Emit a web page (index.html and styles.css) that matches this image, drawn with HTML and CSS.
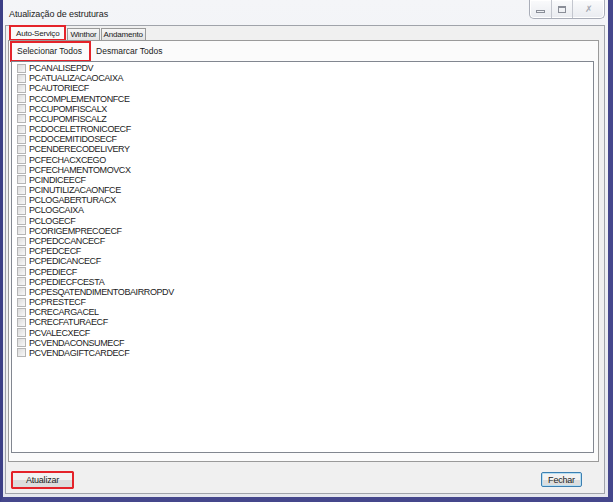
FILE: index.html
```html
<!DOCTYPE html>
<html lang="pt-BR">
<head>
    <meta charset="UTF-8">
    <link rel="stylesheet" href="styles.css">
</head>
<body>
    <div class="window">
        <div class="titlebar">
            <span class="title">Atualização de estruturas</span>
            <div class="caption-btns">
                <span class="cap-btn min"><i></i></span>
                <span class="cap-btn max"><i></i></span>
                <span class="cap-btn close">&#x2717;</span>
            </div>
        </div>
        <div class="client">
            <div class="tabs">
                <span class="tab active marked">Auto-Serviço</span>
                <span class="tab">Winthor</span>
                <span class="tab">Andamento</span>
            </div>
            <div class="tab-panel">
                <div class="toolbar">
                    <span class="tool marked">Selecionar Todos</span>
                    <span class="tool">Desmarcar Todos</span>
                </div>
                <div class="list">
                    <label class="item"><span class="box"></span>PCANALISEPDV</label>
                    <label class="item"><span class="box"></span>PCATUALIZACAOCAIXA</label>
                    <label class="item"><span class="box"></span>PCAUTORIECF</label>
                    <label class="item"><span class="box"></span>PCCOMPLEMENTONFCE</label>
                    <label class="item"><span class="box"></span>PCCUPOMFISCALX</label>
                    <label class="item"><span class="box"></span>PCCUPOMFISCALZ</label>
                    <label class="item"><span class="box"></span>PCDOCELETRONICOECF</label>
                    <label class="item"><span class="box"></span>PCDOCEMITIDOSECF</label>
                    <label class="item"><span class="box"></span>PCENDERECODELIVERY</label>
                    <label class="item"><span class="box"></span>PCFECHACXCEGO</label>
                    <label class="item"><span class="box"></span>PCFECHAMENTOMOVCX</label>
                    <label class="item"><span class="box"></span>PCINDICEECF</label>
                    <label class="item"><span class="box"></span>PCINUTILIZACAONFCE</label>
                    <label class="item"><span class="box"></span>PCLOGABERTURACX</label>
                    <label class="item"><span class="box"></span>PCLOGCAIXA</label>
                    <label class="item"><span class="box"></span>PCLOGECF</label>
                    <label class="item"><span class="box"></span>PCORIGEMPRECOECF</label>
                    <label class="item"><span class="box"></span>PCPEDCCANCECF</label>
                    <label class="item"><span class="box"></span>PCPEDCECF</label>
                    <label class="item"><span class="box"></span>PCPEDICANCECF</label>
                    <label class="item"><span class="box"></span>PCPEDIECF</label>
                    <label class="item"><span class="box"></span>PCPEDIECFCESTA</label>
                    <label class="item"><span class="box"></span>PCPESQATENDIMENTOBAIRROPDV</label>
                    <label class="item"><span class="box"></span>PCPRESTECF</label>
                    <label class="item"><span class="box"></span>PCRECARGACEL</label>
                    <label class="item"><span class="box"></span>PCRECFATURAECF</label>
                    <label class="item"><span class="box"></span>PCVALECXECF</label>
                    <label class="item"><span class="box"></span>PCVENDACONSUMECF</label>
                    <label class="item"><span class="box"></span>PCVENDAGIFTCARDECF</label>
                </div>
            </div>
            <div class="footer">
                <button class="btn marked">Atualizar</button>
                <button class="btn default">Fechar</button>
            </div>
        </div>
    </div>
</body>
</html>
```

FILE: styles.css
```css
* {
    margin: 0;
    padding: 0;
    box-sizing: border-box;
}

body {
    width: 613px;
    height: 502px;
    background-color: #ffffff;
    font-family: "Liberation Sans", Arial, sans-serif;
    color: #1a1a1a;
}

/* window frame: dark glass edge on left, right and bottom */
.window {
    width: 613px;
    height: 502px;
    display: flex;
    flex-direction: column;
    background: linear-gradient(#f4f5f8, #e6e8ee);
    border-left: 3px solid #3c3f86;
    border-right: 5px solid #45478c;
    border-bottom: 5px solid #45478c;
    padding: 0 3px 3px 2px;
}

.titlebar {
    height: 25px;
    display: flex;
    align-items: flex-start;
    justify-content: space-between;
    flex-shrink: 0;
}

.title {
    font-size: 9px;
    letter-spacing: -0.1px;
    color: #222;
    padding: 9px 0 0 4px;
}

.caption-btns {
    display: flex;
    height: 19px;
    border: 1px solid #a9adb8;
    border-top: none;
    border-radius: 0 0 5px 5px;
    background: linear-gradient(#fafbfc, #e9ebf0);
    box-shadow: inset 0 0 0 1px #ffffff;
}

.cap-btn {
    width: 22px;
    display: flex;
    align-items: center;
    justify-content: center;
    border-right: 1px solid #c3c6ce;
    color: #a6aab3;
}

.cap-btn.max {
    width: 21px;
}

.cap-btn.close {
    width: 31px;
    border-right: none;
    font-size: 9px;
}

.cap-btn.min i {
    width: 9px;
    height: 3px;
    border: 1px solid #8a8e98;
    margin-top: 4px;
}

.cap-btn.max i {
    width: 8px;
    height: 7px;
    border: 1px solid #8a8e98;
    border-top-width: 2px;
}

.client {
    flex: 1;
    display: flex;
    flex-direction: column;
    background-color: #f0f0f0;
    border: 1px solid #a0a3aa;
    padding: 0 5px 0 2px;
}

.tabs {
    display: flex;
    align-items: flex-end;
    height: 14px;
    font-size: 8px;
    padding-left: 2px;
    flex-shrink: 0;
}

.tab {
    padding: 1px 2px 0 2px;
    height: 12px;
    border: 1px solid #9a9a9a;
    border-bottom: none;
    background: linear-gradient(#f6f6f6, #e2e2e2);
    margin-right: 1px;
    letter-spacing: -0.2px;
}

.tab.active {
    height: 14px;
    background: #fafafa;
    padding: 2px 5px 0 5px;
    margin-right: 2px;
}

.marked {
    outline: 2px solid #e4232a;
    outline-offset: -1px;
}

.tab-panel {
    flex: 1;
    display: flex;
    flex-direction: column;
    border: 1px solid #9a9a9a;
    background-color: #fbfbfb;
    padding: 0 4px 8px 2px;
}

.toolbar {
    display: flex;
    align-items: flex-end;
    height: 20px;
    font-size: 8.5px;
    flex-shrink: 0;
}

.tool {
    height: 19px;
    line-height: 19px;
    padding: 0 8px 0 6px;
}

.list {
    flex: 1;
    border: 1px solid #828790;
    background-color: #ffffff;
    padding-top: 1px;
}

.item {
    display: flex;
    align-items: center;
    height: 10.18px;
    font-size: 9px;
    letter-spacing: -0.4px;
    color: #222;
    padding-left: 5px;
}

.box {
    width: 9px;
    height: 9px;
    border: 1px solid #b5b5b5;
    background: linear-gradient(135deg, #dcdcdc, #f8f8f8);
    margin-right: 3px;
    flex-shrink: 0;
}

.footer {
    height: 31px;
    display: flex;
    justify-content: space-between;
    align-items: center;
    padding: 4px 17px 0 3px;
    flex-shrink: 0;
}

.btn {
    font-family: "Liberation Sans", Arial, sans-serif;
    font-size: 9px;
    color: #222;
    height: 15px;
    border: 1px solid #707070;
    border-radius: 2px;
    background: linear-gradient(#f2f2f2 50%, #dddddd 50%);
    letter-spacing: -0.2px;
}

.btn.marked {
    width: 63px;
    height: 18px;
    border-color: #e4232a;
    outline-offset: -2px;
}

.btn.default {
    width: 41px;
    border-color: #3c7fb1;
    box-shadow: inset 0 0 0 1px #b8dff3;
}
```
